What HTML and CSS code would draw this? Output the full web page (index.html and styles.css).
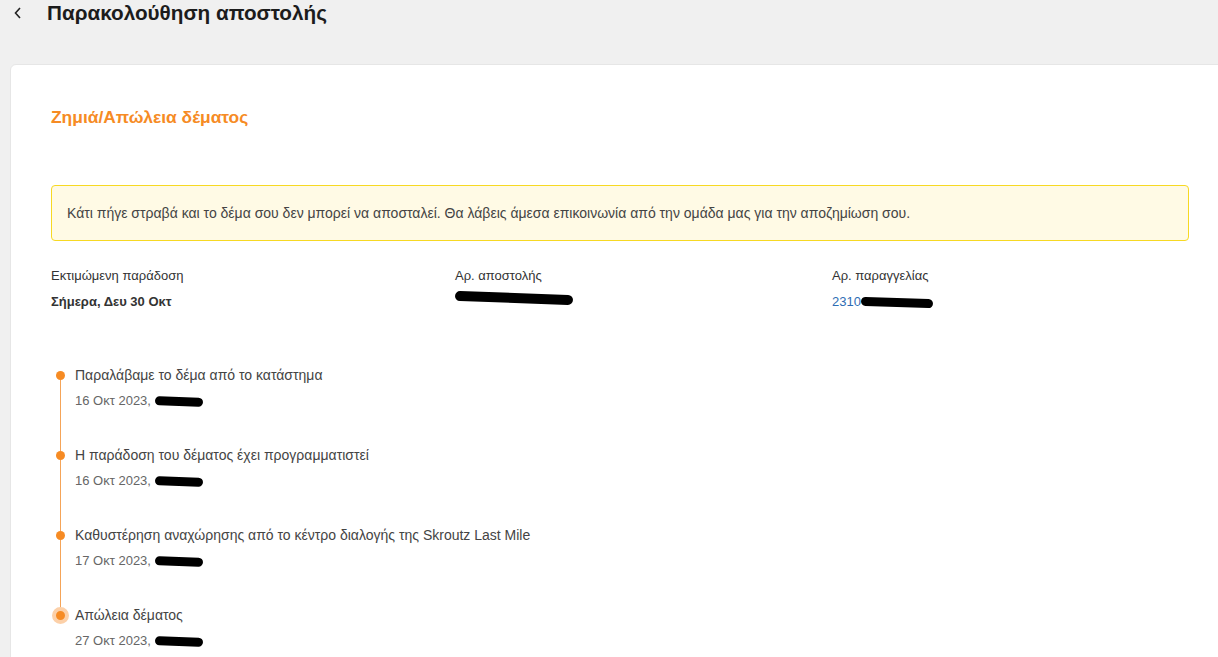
FILE: index.html
```html
<!DOCTYPE html>
<html lang="el">
<head>
    <meta charset="UTF-8">
    <meta name="viewport" content="width=device-width, initial-scale=1.0">
    <title>Παρακολούθηση αποστολής</title>
    <link rel="stylesheet" href="styles.css">
</head>
<body>
    <header class="page-header">
        <a class="back" href="#" aria-label="Πίσω">
            <svg width="10" height="14" viewBox="0 0 10 14"><path d="M7 2 L2.5 7 L7 12" fill="none" stroke="#222" stroke-width="1.6"/></svg>
        </a>
        <h1>Παρακολούθηση αποστολής</h1>
    </header>

    <main class="card">
        <h2 class="status">Ζημιά/Απώλεια δέματος</h2>

        <div class="notice">
            Κάτι πήγε στραβά και το δέμα σου δεν μπορεί να αποσταλεί. Θα λάβεις άμεσα επικοινωνία από την ομάδα μας για την αποζημίωση σου.
        </div>

        <div class="details">
            <div class="detail">
                <span class="label">Εκτιμώμενη παράδοση</span>
                <strong class="value">Σήμερα, Δευ 30 Οκτ</strong>
            </div>
            <div class="detail">
                <span class="label">Αρ. αποστολής</span>
                <span class="value"><span class="redact redact-long"></span></span>
            </div>
            <div class="detail">
                <span class="label">Αρ. παραγγελίας</span>
                <span class="value"><a class="link" href="#">2310</a><span class="redact redact-mid"></span></span>
            </div>
        </div>

        <ol class="timeline">
            <li class="step">
                <span class="step-title">Παραλάβαμε το δέμα από το κατάστημα</span>
                <span class="step-date">16 Οκτ 2023, <span class="redact"></span></span>
            </li>
            <li class="step">
                <span class="step-title">Η παράδοση του δέματος έχει προγραμματιστεί</span>
                <span class="step-date">16 Οκτ 2023, <span class="redact"></span></span>
            </li>
            <li class="step">
                <span class="step-title">Καθυστέρηση αναχώρησης από το κέντρο διαλογής της Skroutz Last Mile</span>
                <span class="step-date">17 Οκτ 2023, <span class="redact"></span></span>
            </li>
            <li class="step current">
                <span class="step-title">Απώλεια δέματος</span>
                <span class="step-date">27 Οκτ 2023, <span class="redact"></span></span>
            </li>
        </ol>
    </main>
</body>
</html>
```

FILE: styles.css
```css
body {
    margin: 0;
    background-color: #f0f0f0;
    font-family: "Liberation Sans", Arial, sans-serif;
    color: #333;
    overflow: hidden;
}
.page-header {
    display: flex;
    align-items: center;
    height: 28px;
    margin-top: -1px;
    padding-left: 13px;
}
.back {
    display: flex;
    width: 34px;
}
h1 {
    margin: 0;
    font-size: 20.7px;
    font-weight: bold;
    color: #1c1c1c;
}
.card {
    margin: 37px 0 0 10px;
    width: 1240px;
    min-height: 620px;
    background-color: #fff;
    border: 1px solid #e6e6e6;
    border-radius: 6px 0 0 0;
    padding: 40px 40px 0 40px;
    box-sizing: border-box;
}
.status {
    margin: 0;
    font-size: 17.4px;
    line-height: 24px;
    color: #f68b24;
}
.notice {
    margin-top: 56px;
    width: 1138px;
    box-sizing: border-box;
    height: 56px;
    padding: 0 15px;
    display: flex;
    align-items: center;
    background-color: #fffae5;
    border: 1px solid #f7d923;
    border-radius: 4px;
    font-size: 14px;
    color: #444;
}
.details {
    display: grid;
    grid-template-columns: 404px 377px 1fr;
    margin-top: 26px;
}
.detail {
    display: flex;
    flex-direction: column;
    gap: 8px;
}
.label {
    font-size: 13px;
    line-height: 18px;
    color: #333;
}
.value {
    font-size: 13px;
    line-height: 18px;
    display: flex;
    align-items: center;
}
.link {
    color: #2e6db4;
    text-decoration: none;
}
.redact {
    display: inline-block;
    width: 48px;
    height: 9px;
    background-color: #000;
    border-radius: 5px;
    transform: rotate(2deg);
    vertical-align: middle;
}
.redact-long {
    width: 118px;
    height: 10px;
}
.redact-mid {
    width: 72px;
}
.timeline {
    list-style: none;
    margin: 55px 0 0 0;
    padding: 0;
}
.step {
    position: relative;
    display: flex;
    flex-direction: column;
    gap: 8px;
    padding-left: 24px;
    height: 80px;
}
.step::before {
    content: "";
    position: absolute;
    left: 4.5px;
    top: 5px;
    width: 9px;
    height: 9px;
    border-radius: 50%;
    background-color: #f68b24;
}
.step::after {
    content: "";
    position: absolute;
    left: 8.5px;
    top: 14px;
    width: 1px;
    height: 71px;
    background-color: #f5a458;
}
.step.current::before {
    left: 0.5px;
    top: 1px;
    width: 9px;
    height: 9px;
    border: 4px solid #fcd0a8;
}
.step.current::after {
    display: none;
}
.step-title {
    font-size: 14px;
    line-height: 18px;
    color: #444;
}
.step-date {
    font-size: 13px;
    line-height: 18px;
    color: #666;
}
```
